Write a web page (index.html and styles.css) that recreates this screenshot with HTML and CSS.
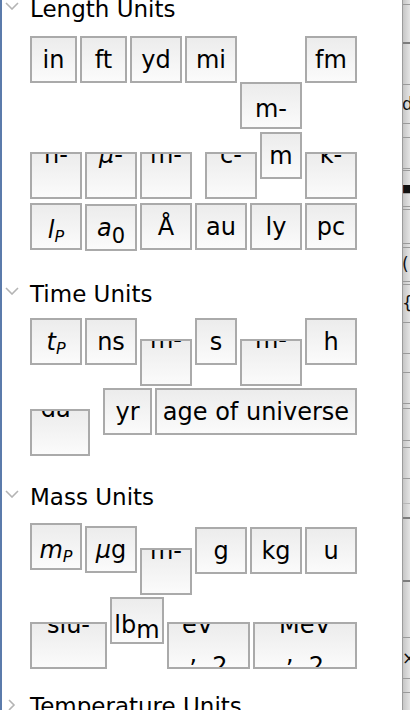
FILE: index.html
```html
<!DOCTYPE html>
<html lang="en">
<head>
  <meta charset="UTF-8">
  <meta name="viewport" content="width=device-width, initial-scale=1.0">
  <title>Units Palette</title>
  <link rel="stylesheet" href="styles.css">
</head>
<body>
  <div class="window">
    <main class="panel">

      <!-- Length -->
      <section class="group group-length">
        <h2 class="group-title">
          <span class="twisty"><svg class="chevron-down" viewBox="0 0 14 8"><polyline points="1,1 7,7 13,1"/></svg></span>
          Length Units
        </h2>
        <div class="keys">
          <div class="key-row">
            <button class="key w47">in</button>
            <button class="key w47">ft</button>
            <button class="key">yd</button>
            <button class="key">mi</button>
            <button class="key w62 sink-46 low-text">m-</button>
            <button class="key">fm</button>
          </div>
          <div class="key-row">
            <button class="key clipped sink-20"><span>n-</span></button>
            <button class="key clipped sink-20"><span><i>μ</i>-</span></button>
            <button class="key clipped sink-20 spaced"><span>m-</span></button>
            <button class="key clipped sink-20"><span>c-</span></button>
            <button class="key w42">m</button>
            <button class="key clipped sink-20"><span>k-</span></button>
          </div>
          <div class="key-row">
            <button class="key low-text"><span><i>l</i><span class="sub-p">P</span></span></button>
            <button class="key sink-1"><span><i>a</i><span class="sub-0">0</span></span></button>
            <button class="key">Å</button>
            <button class="key">au</button>
            <button class="key">ly</button>
            <button class="key">pc</button>
          </div>
        </div>
      </section>

      <!-- Time -->
      <section class="group group-time">
        <h2 class="group-title">
          <span class="twisty"><svg class="chevron-down" viewBox="0 0 14 8"><polyline points="1,1 7,7 13,1"/></svg></span>
          Time Units
        </h2>
        <div class="keys">
          <div class="key-row">
            <button class="key"><span><i>t</i><span class="sub-p">P</span></span></button>
            <button class="key">ns</button>
            <button class="key clipped shallow sink-21"><span>m-</span></button>
            <button class="key w42">s</button>
            <button class="key w62 clipped shallow sink-21"><span>m-</span></button>
            <button class="key">h</button>
          </div>
          <div class="key-row">
            <button class="key w60 clipped shallowest sink-21 spaced"><span>da-</span></button>
            <button class="key w49">yr</button>
            <button class="key w202">age of universe</button>
          </div>
        </div>
      </section>

      <!-- Mass -->
      <section class="group group-mass">
        <h2 class="group-title">
          <span class="twisty"><svg class="chevron-down" viewBox="0 0 14 8"><polyline points="1,1 7,7 13,1"/></svg></span>
          Mass Units
        </h2>
        <div class="keys">
          <div class="key-row">
            <button class="key low-text"><span><i>m</i><span class="sub-p">P</span></span></button>
            <button class="key sink-3"><span><i>μ</i>g</span></button>
            <button class="key clipped sink-25"><span>m-</span></button>
            <button class="key sink-4">g</button>
            <button class="key sink-4">kg</button>
            <button class="key sink-4">u</button>
          </div>
          <div class="key-row">
            <button class="key w77 clipped sink-25"><span>slu-</span></button>
            <button class="key w54 lower-text"><span>lb<span class="sub-m">m</span></span></button>
            <button class="key w83 clipped sink-25 two-line">
              <span class="nudge-left">eV</span>
              <span class="second"><span class="tick">,</span>&nbsp;&nbsp;2</span>
            </button>
            <button class="key w104 clipped sink-25 two-line">
              <span>MeV</span>
              <span class="second"><span class="tick">,</span>&nbsp;&nbsp;2</span>
            </button>
          </div>
        </div>
      </section>

      <!-- Temperature (collapsed) -->
      <section class="group group-temp">
        <h2 class="group-title">
          <span class="twisty"><svg class="chevron-right" viewBox="0 0 8 12"><polyline points="1,1 6,6 1,11"/></svg></span>
          Temperature Units
        </h2>
      </section>
    </main>

    <!-- neighbouring pane, mostly cut off -->
    <aside class="side-strip">
      <div class="cell faint">A</div>
      <div class="cell"></div>
      <div class="cell dark"></div>
      <div class="cell glyph">d</div>
      <div class="cell"></div>
      <div class="cell"></div>
      <div class="cell"></div>
      <div class="cell glyph square">■</div>
      <div class="cell"></div>
      <div class="cell"></div>
      <div class="cell"></div>
      <div class="cell glyph">(</div>
      <div class="cell"></div>
      <div class="cell glyph">{</div>
      <div class="cell"></div>
      <div class="cell"></div>
      <div class="cell"></div>
      <div class="cell"></div>
      <div class="cell"></div>
      <div class="cell"></div>
      <div class="cell"></div>
      <div class="cell"></div>
      <div class="cell light"></div>
      <div class="cell dark"></div>
      <div class="cell dark"></div>
      <div class="cell glyph">×</div>
      <div class="cell"></div>
      <div class="cell"></div>
    </aside>
  </div>
</body>
</html>
```

FILE: styles.css
```css
:root {
  --ink: #000000;
  --key-border: #aaaaaa;
  --key-top: #ececec;
  --key-bottom: #fbfbfb;
  --twisty: #b4b4b4;
  --edge: #5b7bab;
}

* {
  margin: 0;
  padding: 0;
  box-sizing: border-box;
}

html, body {
  height: 100%;
  overflow: hidden;
}

body {
  font-family: 'DejaVu Sans', 'Liberation Sans', sans-serif;
  color: var(--ink);
  background: #ffffff;
}

.window {
  display: flex;
  height: 710px;
}

.panel {
  width: 402px;
  flex: none;
  border-left: 2px solid var(--edge);
  overflow: hidden;
}

/* section headers */

.group-title {
  display: flex;
  align-items: flex-start;
  height: 28px;
  font-size: 23px;
  line-height: 28px;
  font-weight: normal;
  white-space: nowrap;
}

.twisty {
  width: 28px;
  flex: none;
}

.chevron-down {
  display: block;
  width: 14px;
  height: 8px;
  margin: 7px 0 0 3px;
}

.chevron-right {
  display: block;
  width: 8px;
  height: 12px;
  margin: 7px 0 0 6px;
}

.twisty polyline {
  fill: none;
  stroke: var(--twisty);
  stroke-width: 1.6;
}

.group-length .group-title { margin-top: -5px; }
.group-time .group-title { margin-top: 29px; }
.group-mass .group-title { margin-top: 27px; }
.group-temp .group-title { margin-top: 23px; }

/* key grid */

.keys {
  padding-left: 28px;
}

.key-row {
  display: flex;
  align-items: flex-start;
  gap: 3px;
}

.group-length .keys { margin-top: 13px; }
.group-length .key-row:nth-child(2) { margin-top: 3px; }
.group-length .key-row:nth-child(3) { margin-top: 4px; }

.group-time .keys { margin-top: 10px; }
.group-time .key-row:nth-child(2) { margin-top: 2px; }

.group-mass .keys { margin-top: 12px; }
.group-mass .key-row:nth-child(2) { margin-top: 2px; }

.key {
  flex: none;
  display: flex;
  flex-direction: column;
  align-items: center;
  justify-content: center;
  width: 52px;
  height: 47px;
  border: 2px solid var(--key-border);
  border-radius: 0;
  background: linear-gradient(to bottom, var(--key-top), var(--key-bottom));
  font-family: inherit;
  font-size: 24px;
  line-height: 26px;
  color: var(--ink);
  white-space: nowrap;
  overflow: hidden;
  cursor: pointer;
}

.key > span {
  display: block;
}

.w42 { width: 42px; }
.w47 { width: 47px; }
.w49 { width: 49px; }
.w54 { width: 54px; }
.w60 { width: 60px; }
.w62 { width: 62px; }
.w77 { width: 77px; }
.w83 { width: 83px; }
.w104 { width: 104px; }
.w202 { width: 202px; }

.sink-1 { margin-top: 1px; }
.sink-3 { margin-top: 3px; }
.sink-4 { margin-top: 4px; }
.sink-20 { margin-top: 20px; }
.sink-21 { margin-top: 21px; }
.sink-25 { margin-top: 25px; }
.sink-46 { margin-top: 46px; }

.spaced { margin-right: 10px; }

.low-text { padding-top: 6px; }
.lower-text { padding-top: 8px; }

/* labels pushed up past the top edge of their key */
.key.clipped {
  justify-content: flex-start;
}

.key.clipped > span:first-child { margin-top: -12px; }
.key.clipped.shallow > span:first-child { margin-top: -14px; }
.key.clipped.shallowest > span:first-child { margin-top: -15px; }

.two-line .second {
  margin-top: 15px;
}

.nudge-left {
  margin-right: 22px;
}

.tick {
  display: inline-block;
  vertical-align: 12px;
  line-height: 0;
}

/* subscripts */

.sub-p {
  font-size: 16px;
  font-style: italic;
  vertical-align: -4px;
  line-height: 0;
}

.sub-0 {
  font-size: 21px;
  vertical-align: -7px;
  line-height: 0;
}

.sub-m {
  vertical-align: -5px;
  line-height: 0;
}

/* right-hand neighbour pane */

.side-strip {
  flex: 1;
  display: grid;
  grid-template-rows: 4px 38px 42px 39px 14px 31px 2px 36px 3px 34px 4px 34px 3px 38px 31px 19px 31px 5px 32px 7px 31px 25px 14px 63px 57px 41px 14px 18px;
  border-left: 1px solid #9c9c9c;
  background: linear-gradient(to right, #c6c6c6, #e4e4e4);
  overflow: hidden;
}

.cell {
  border-top: 1px solid #9a9a9a;
  font-size: 17px;
  line-height: 1;
  overflow: hidden;
  white-space: nowrap;
}

.cell:first-child {
  border-top: none;
}

.cell.dark { border-top: 2px solid #7d7d7d; }
.cell.light { border-top-color: #b8b8b8; }

.cell.faint {
  color: #b0b0b0;
  padding-top: 17px;
}

.cell.glyph {
  display: flex;
  align-items: center;
  margin-left: -1px;
  color: #111;
}

.cell.square {
  font-size: 11px;
}
```
